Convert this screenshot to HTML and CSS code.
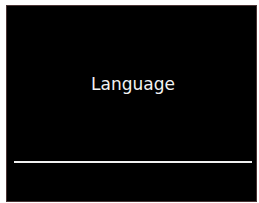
FILE: index.html
```html
<!DOCTYPE html>
<html>
<head>
<meta charset="utf-8">
<link rel="stylesheet" href="styles.css">
</head>
<body>
<div class="screen">
  <div class="title">Language</div>
  <div class="rule"></div>
</div>
</body>
</html>
```
FILE: styles.css
```css
html, body {
  margin: 0;
  padding: 0;
  background: #fff;
}
.screen {
  box-sizing: border-box;
  margin: 5px 0 0 6px;
  width: 251px;
  height: 197px;
  background: #000;
  border: 1px solid #4a3434;
  display: flex;
  flex-direction: column;
  padding: 0 4px 0 7px;
}
.title {
  margin-top: 64px;
  height: 28px;
  text-align: center;
  color: #f2f2f2;
  font-family: "DejaVu Sans", sans-serif;
  font-size: 17px;
  line-height: 28px;
}
.rule {
  margin-top: 63px;
  height: 2px;
  background: #f0f0f0;
}
```
